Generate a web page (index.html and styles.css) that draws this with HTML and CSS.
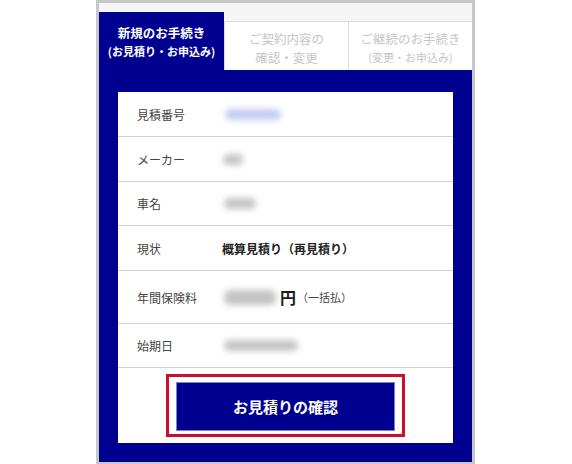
FILE: index.html
```html
<!DOCTYPE html>
<html lang="ja">
<head>
<meta charset="utf-8">
<title>お見積り</title>
<link rel="stylesheet" href="styles.css">
</head>
<body>
<div class="frame">
  <div class="tabs">
    <div class="tab tab--active">
      <span class="tab__line">新規のお手続き</span>
      <span class="tab__sub">(お見積り・お申込み)</span>
    </div>
    <div class="tab">
      <span class="tab__line">ご契約内容の</span>
      <span class="tab__line">確認・変更</span>
    </div>
    <div class="tab">
      <span class="tab__line">ご継続のお手続き</span>
      <span class="tab__sub">(変更・お申込み)</span>
    </div>
  </div>
  <div class="body">
    <div class="panel">
      <div class="row">
        <div class="label">見積番号</div>
        <div class="value"><span class="blur blur--blue blur--id"></span></div>
      </div>
      <div class="row">
        <div class="label">メーカー</div>
        <div class="value"><span class="blur blur--maker"></span></div>
      </div>
      <div class="row row--s">
        <div class="label">車名</div>
        <div class="value"><span class="blur blur--car"></span></div>
      </div>
      <div class="row">
        <div class="label">現状</div>
        <div class="value value--bold">概算見積り（再見積り）</div>
      </div>
      <div class="row row--tall">
        <div class="label">年間保険料</div>
        <div class="value"><span class="blur blur--fee"></span><span class="yen">円</span><span class="pay">（一括払）</span></div>
      </div>
      <div class="row row--s">
        <div class="label">始期日</div>
        <div class="value"><span class="blur blur--date"></span></div>
      </div>
      <div class="action">
        <div class="highlight">
          <button class="btn" type="button">お見積りの確認</button>
        </div>
      </div>
    </div>
  </div>
</div>
</body>
</html>
```

FILE: styles.css
```css
html, body {
  margin: 0;
  padding: 0;
  background: #ffffff;
}

body {
  font-family: "Noto Sans CJK JP", "Noto Sans", sans-serif;
  color: #333333;
}

.frame {
  width: 373px;
  margin-left: 96px;
  border: 3px solid #c8c8c8;
}

.tabs {
  display: grid;
  grid-template-columns: 125px 124px 124px;
  align-items: end;
  background: #f5f5f5;
  padding-top: 9px;
}

.tab {
  height: 49px;
  box-sizing: border-box;
  background: #ffffff;
  border-top: 1px solid #dddddd;
  border-left: 1px solid #dddddd;
  display: flex;
  flex-direction: column;
  align-items: center;
  justify-content: center;
  color: #c6c6c6;
  padding-top: 3px;
}

.tab--active {
  height: 58px;
  background: #000090;
  border: none;
  color: #ffffff;
  font-weight: bold;
  padding-top: 1px;
}

.tab__line {
  font-size: 12.5px;
  line-height: 19px;
  white-space: nowrap;
}

.tab__sub {
  font-size: 11px;
  line-height: 19px;
  white-space: nowrap;
}

.body {
  background: #000090;
  padding: 22px 19px 19px 19px;
}

.panel {
  background: #ffffff;
}

.row {
  display: flex;
  align-items: center;
  height: 45px;
  box-sizing: border-box;
  border-bottom: 1px solid #d2d2d2;
  padding-left: 19px;
}

.row--s {
  height: 44px;
}

.row--tall {
  height: 53px;
}

.label {
  width: 85px;
  flex: none;
  font-size: 12px;
  color: #444444;
}

.value {
  display: flex;
  align-items: center;
  font-size: 12px;
}

.value--bold {
  font-weight: bold;
  color: #222222;
}

.blur {
  display: inline-block;
  height: 11px;
  border-radius: 6px;
  background: #c4c4c4;
  filter: blur(3px);
}

.blur--blue {
  background: #c3cbf0;
}

.blur--id {
  width: 56px;
  margin-left: 3px;
}

.blur--maker {
  width: 20px;
  margin-left: 1px;
}

.blur--car {
  width: 32px;
  margin-left: 2px;
}

.blur--fee {
  width: 52px;
  height: 15px;
  margin-left: 2px;
}

.blur--date {
  width: 74px;
  margin-left: 2px;
}

.yen {
  font-size: 16px;
  font-weight: bold;
  color: #1a1a1a;
  margin-left: 4px;
}

.pay {
  font-size: 11px;
  color: #444444;
  margin-left: 1px;
}

.action {
  display: flex;
  justify-content: center;
  padding: 6px 0;
}

.highlight {
  border: 3px solid #c8102e;
  padding: 5px 7px 3px 7px;
  background: #ffffff;
}

.btn {
  display: block;
  width: 219px;
  height: 49px;
  margin: 0;
  background: #000090;
  border: 1px solid #8080bb;
  color: #ffffff;
  font-family: "Noto Sans CJK JP", "Noto Sans", sans-serif;
  font-size: 15px;
  font-weight: bold;
  padding: 0;
}
```
